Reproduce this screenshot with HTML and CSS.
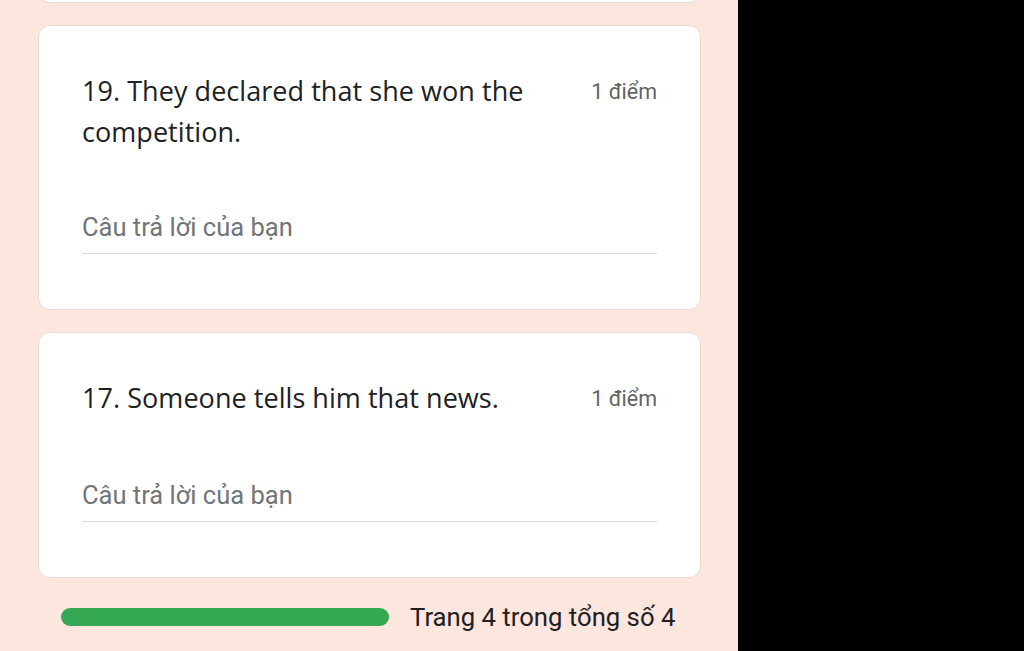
FILE: index.html
```html
<!DOCTYPE html>
<html lang="vi">
<head>
    <meta charset="UTF-8">
    <title>Biểu mẫu</title>
    <link rel="stylesheet" href="styles.css">
</head>
<body>
<div class="screen">
    <main class="form">
        <div class="card card-stub"></div>

        <div class="card">
            <div class="question">
                <div class="title">19. They declared that she won the competition.</div>
                <div class="points">1 điểm</div>
            </div>
            <div class="answer">Câu trả lời của bạn</div>
        </div>

        <div class="card">
            <div class="question">
                <div class="title">17. Someone tells him that news.</div>
                <div class="points">1 điểm</div>
            </div>
            <div class="answer">Câu trả lời của bạn</div>
        </div>

        <div class="progress">
            <div class="bar"></div>
            <span class="page-count">Trang 4 trong tổng số 4</span>
        </div>
    </main>
    <div class="side"></div>
</div>
</body>
</html>
```

FILE: styles.css
```css
html, body {
    margin: 0;
    padding: 0;
    height: 100%;
    overflow: hidden;
}
.screen {
    display: flex;
    height: 651px;
}
.form {
    width: 738px;
    flex-shrink: 0;
    background-color: #fde6de;
    padding: 0 37px 0 38px;
    box-sizing: border-box;
    display: flex;
    flex-direction: column;
    gap: 22px;
}
.side {
    flex: 1;
    background-color: #000000;
}
.card {
    background-color: #ffffff;
    border: 1px solid #e6dcd8;
    border-radius: 12px;
    padding: 44px 43px 55px 43px;
}
.card-stub {
    height: 0;
    padding: 0;
    margin-top: -21px;
    min-height: 22px;
    flex-shrink: 0;
}
.question {
    display: flex;
    align-items: flex-start;
}
.title {
    flex: 1;
    font-family: "Open Sans", sans-serif;
    font-size: 27px;
    line-height: 41px;
    letter-spacing: 0.05px;
    color: #202124;
    padding-right: 40px;
}
.points {
    font-family: Roboto, sans-serif;
    font-size: 21.5px;
    line-height: 43px;
    color: #5f6368;
    white-space: nowrap;
}
.answer {
    margin-top: 60px;
    font-family: Roboto, sans-serif;
    font-size: 25.5px;
    line-height: 30px;
    color: #70757a;
    padding-bottom: 11px;
    border-bottom: 1px solid #dadce0;
}
.progress {
    display: flex;
    align-items: center;
    gap: 21px;
    padding: 2px 0 0 23px;
}
.bar {
    width: 328px;
    height: 18px;
    border-radius: 9px;
    background-color: #34a853;
}
.page-count {
    font-family: Roboto, sans-serif;
    font-size: 25.7px;
    line-height: 30px;
    color: #202124;
}
```
